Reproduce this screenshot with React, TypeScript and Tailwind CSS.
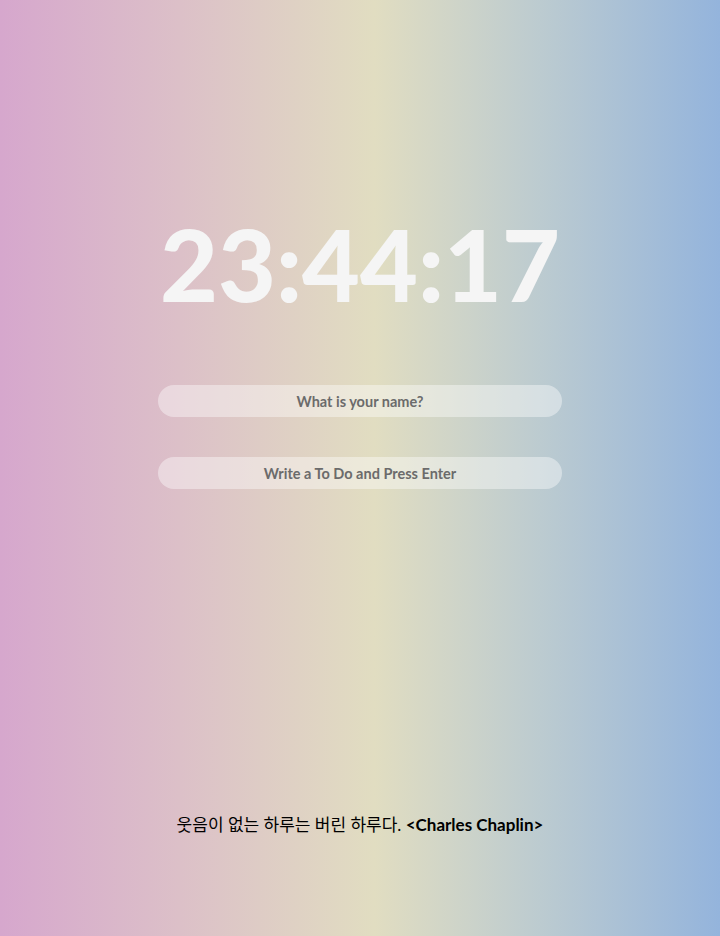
export default function App() {
  return (
    <div
      className="w-full h-[936px] flex flex-col items-center text-center bg-[linear-gradient(90deg,#d6a7cd_0%,#dcc0c8_25%,#e1ddc1_52%,#bccbd0_75%,#94b4dc_100%)]"
      style={{ fontFamily: '"Lato", "Noto Sans CJK KR", sans-serif' }}
    >
      {/* Clock */}
      <h1 className="mt-[208px] text-[100px] leading-[110px] font-black tracking-[0px] text-[#f5f5f5]">
        23:44:17
      </h1>

      {/* Forms */}
      <div className="mt-[67px] flex flex-col gap-10 w-[404px]">
        <input
          type="text"
          placeholder="What is your name?"
          className="h-8 w-full rounded-full bg-white/40 text-center text-[14.5px] font-bold text-[#6b6b6b] placeholder:text-[#6b6b6b] outline-none"
        />
        <input
          type="text"
          placeholder="Write a To Do and Press Enter"
          className="h-8 w-full rounded-full bg-white/40 text-center text-[14.5px] font-bold text-[#6b6b6b] placeholder:text-[#6b6b6b] outline-none"
        />
      </div>

      {/* Quote */}
      <div className="mt-[323px] text-[17px] text-black">
        <span>웃음이 없는 하루는 버린 하루다. </span>
        <span className="font-bold">&lt;Charles Chaplin&gt;</span>
      </div>
    </div>
  );
}
